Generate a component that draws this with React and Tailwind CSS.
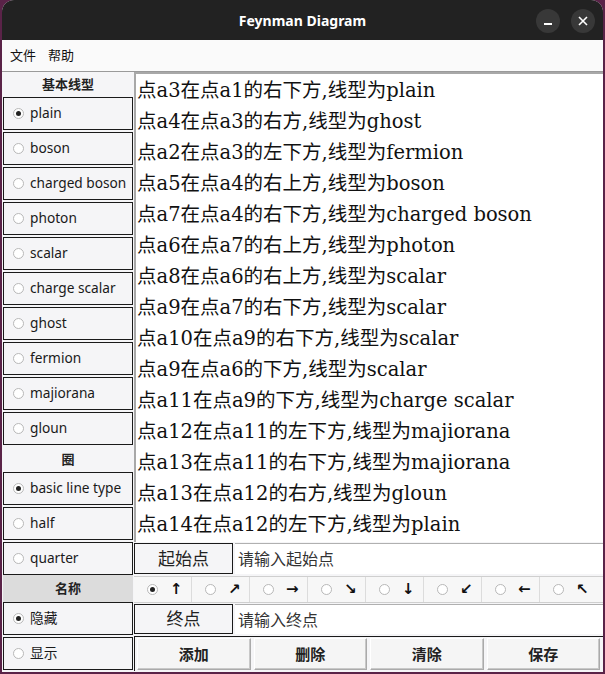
import React from 'react';

const lines = [
  '点a3在点a1的右下方,线型为plain',
  '点a4在点a3的右方,线型为ghost',
  '点a2在点a3的左下方,线型为fermion',
  '点a5在点a4的右上方,线型为boson',
  '点a7在点a4的右下方,线型为charged boson',
  '点a6在点a7的右上方,线型为photon',
  '点a8在点a6的右上方,线型为scalar',
  '点a9在点a7的右下方,线型为scalar',
  '点a10在点a9的右下方,线型为scalar',
  '点a9在点a6的下方,线型为scalar',
  '点a11在点a9的下方,线型为charge scalar',
  '点a12在点a11的左下方,线型为majiorana',
  '点a13在点a11的右下方,线型为majiorana',
  '点a13在点a12的右方,线型为gloun',
  '点a14在点a12的左下方,线型为plain',
];

const lineTypes = ['plain', 'boson', 'charged boson', 'photon', 'scalar', 'charge scalar', 'ghost', 'fermion', 'majiorana', 'gloun'];
const circles = ['basic line type', 'half', 'quarter'];
const arrows = ['↑', '↗', '→', '↘', '↓', '↙', '←', '↖'];

const sans = "font-['Noto_Sans','Noto_Sans_CJK_SC',sans-serif]";

function Dot({ on }) {
  return (
    <span className="w-[11px] h-[11px] rounded-full border border-[#b8b8b8] bg-white flex items-center justify-center shrink-0">
      {on && <span className="w-[5px] h-[5px] rounded-full bg-[#222]" />}
    </span>
  );
}

function RadioBox({ label, on, gap = true }) {
  return (
    <div className={`h-[33px] border border-[#1a1a1a] flex items-center pl-[9px] gap-[6px] text-[13.7px] text-[#1a1a1a] whitespace-nowrap ${gap ? 'mb-[2px]' : ''}`}>
      <Dot on={on} />
      <span>{label}</span>
    </div>
  );
}

export default function App() {
  return (
    <div className={`w-[605px] h-[674px] bg-[#5a2348] px-[2px] pb-[2px] ${sans}`}>
      <div className="h-full flex flex-col rounded-t-[12px] overflow-hidden bg-[#f5f5f7]">
        {/* title bar */}
        <div className="h-[40px] bg-[#222222] flex items-center relative shrink-0">
          <div className="flex-1 text-center text-white text-[14px] font-bold">Feynman Diagram</div>
          <div className="absolute right-[8px] top-[9px] flex gap-[11px]">
            <span className="w-[24px] h-[24px] rounded-full bg-[#383838] flex items-end justify-center pb-[8px]">
              <span className="w-[8px] h-[2px] bg-white" />
            </span>
            <span className="w-[24px] h-[24px] rounded-full bg-[#383838] flex items-center justify-center">
              <svg width="10" height="10" viewBox="0 0 10 10"><path d="M1 1L9 9M9 1L1 9" stroke="white" strokeWidth="1.6" /></svg>
            </span>
          </div>
        </div>

        {/* menu */}
        <div className="h-[32px] bg-[#fafafa] border-b border-[#9a9a9a] flex items-center gap-[12px] px-[8px] text-[13px] text-[#111] shrink-0">
          <span>文件</span>
          <span>帮助</span>
        </div>

        {/* body */}
        <div className="flex flex-1 min-h-0">
          <div className="w-[132px] pl-[1px] pr-[1px] shrink-0">
            <div className="h-[25px] flex items-center justify-center text-[13px] font-bold text-[#222]">基本线型</div>
            {lineTypes.map((t, i) => <RadioBox key={t} label={t} on={i === 0} />)}
            <div className="h-[25px] flex items-center justify-center text-[13px] font-bold text-[#222]">圈</div>
            {circles.map((t, i) => <RadioBox key={t} label={t} on={i === 0} gap={i < 2} />)}
            <div className="h-[27px] bg-[#dcdcdc] flex items-center justify-center text-[13px] font-bold text-[#222]">名称</div>
            <RadioBox label="隐藏" on />
            <RadioBox label="显示" gap={false} />
          </div>

          <div className="flex-1 flex flex-col">
            <div className="h-[470px] bg-white border-t-2 border-l-2 border-[#a8a8a8] pl-[1px] pt-[1px] font-['DejaVu_Serif','Noto_Sans_CJK_SC',serif] text-[19.5px] text-[#111] overflow-hidden">
              {lines.map((l, i) => (
                <div key={i} className="h-[31px] leading-[31px] whitespace-nowrap">{l}</div>
              ))}
            </div>

            <div className="h-[31px] mt-[1px] flex">
              <div className="w-[99px] border border-[#1a1a1a] flex items-center justify-center text-[17px] text-[#222]">起始点</div>
              <div className="flex-1 ml-[2px] bg-white border-t border-[#b0b0b0] flex items-center pl-[3px] text-[16px] text-[#333]">请输入起始点</div>
            </div>

            <div className="h-[27px] mt-[2px] bg-[#f7f7f7] border-y border-[#cfcfcf] flex">
              {arrows.map((a, i) => (
                <div key={a} className={`w-[58px] flex items-center pl-[13px] gap-[12px] ${i < 7 ? 'border-r border-[#dcdcdc]' : ''}`}>
                  <Dot on={i === 0} />
                  <span className="font-['DejaVu_Sans',sans-serif] font-bold text-[15px] text-[#111]">{a}</span>
                </div>
              ))}
            </div>

            <div className="h-[30px] mt-[1px] flex">
              <div className="w-[99px] border border-[#1a1a1a] flex items-center justify-center text-[17px] text-[#222]">终点</div>
              <div className="flex-1 ml-[2px] bg-white border-t border-[#b0b0b0] flex items-center pl-[3px] text-[16px] text-[#333]">请输入终点</div>
            </div>

            <div className="h-[35px] mt-[2px] border-l border-t border-[#1a1a1a] flex gap-[3px] pl-[2px] pr-[3px] pt-[1px] pb-[1px]">
              {['添加', '删除', '清除', '保存'].map(b => (
                <div key={b} className="flex-1 bg-[#f5f5f5] border border-[#aaaaaa] border-t-white border-l-white shadow-[inset_-1px_-1px_0_#c8c8c8] flex items-center justify-center text-[15px] font-bold text-[#222]">{b}</div>
              ))}
            </div>
          </div>
        </div>
      </div>
    </div>
  );
}
